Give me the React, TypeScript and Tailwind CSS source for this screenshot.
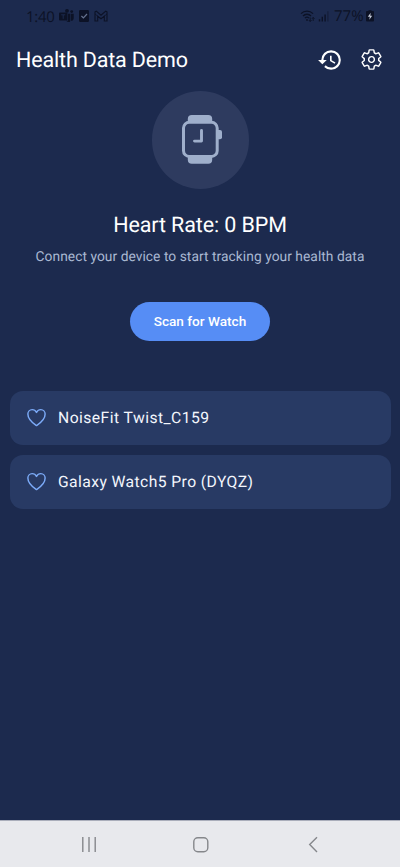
import React from "react";
import { MdHistory } from "react-icons/md";
import { IoSettingsOutline, IoHeartOutline } from "react-icons/io5";

function StatusBar() {
  return (
    <div className="flex h-8 items-center justify-between pl-[26px] pr-[26px] text-[#0c1226]">
      <div className="flex items-center">
        <span className="w-[29px] whitespace-nowrap pt-px text-[15px] leading-8 font-['Open_Sans',sans-serif] tracking-[-0.3px]">1:40</span>
        <svg className="ml-1 h-4 w-[50px]" viewBox="0 0 50 16" fill="currentColor">
          <rect x="0" y="4.5" width="8.5" height="8" rx="1" />
          <path d="M2.2 6.8h4M4.2 6.8v4" stroke="#1c2a4e" strokeWidth="1" fill="none" />
          <circle cx="8" cy="2.8" r="1.9" />
          <circle cx="12.7" cy="3.6" r="1.4" />
          <path d="M9 5.7h2.1v8.1a4 4 0 0 1-4-1H9zM11.7 5.7h3v4.2a2.8 2.8 0 0 1-3 2.8z" />
          <rect x="20" y="2" width="10" height="12" rx="1.2" />
          <path d="m22.4 8 2 2 3.6-4" stroke="#65718e" strokeWidth="1.2" fill="none" />
          <path d="M36 13V3.8l1.3-.6 4.7 4 4.7-4 1.3.6V13h-2.7V8.3L42 10.8l-3.3-2.5V13z" fill="none" stroke="currentColor" strokeWidth="1.1" />
          <path d="m36 6 6 4.7L48 6" fill="none" stroke="currentColor" strokeWidth=".8" />
        </svg>
      </div>
      <div className="flex items-center">
        <svg className="h-4 w-[31px]" viewBox="0 0 31 16" fill="none" stroke="currentColor">
          <path d="M1 5.6a8.5 8.5 0 0 1 12 0M3 8a5.5 5.5 0 0 1 8 0M4.9 10.1a3 3 0 0 1 4.2 0" strokeWidth="1.3" />
          <circle cx="7" cy="12" r=".9" fill="currentColor" stroke="none" />
          <path d="M10.2 9.5v4M8.8 12l1.4 1.5 1.4-1.5M13.2 13V9.5M11.9 10.8l1.3-1.4 1.3 1.4" strokeWidth=".9" />
          <path d="M19.5 13.4v-2.2M22.3 13.4V8.7M25.1 13.4V6.4" strokeWidth="1.4" />
          <path d="M27.9 13.4V3.3" strokeWidth="1.2" opacity=".5" />
        </svg>
        <span className="ml-[3px] w-[31px] whitespace-nowrap text-[15px] leading-8 font-['Open_Sans',sans-serif]">77%</span>
        <svg className="ml-[1px] h-3 w-2" viewBox="0 0 8 12">
          <path d="M2.5 1V.3h3V1H7a1 1 0 0 1 1 1v8.5a1 1 0 0 1-1 1H1a1 1 0 0 1-1-1V2a1 1 0 0 1 1-1z" fill="currentColor" />
          <path d="M4.7 2.8 1.8 6.8h2L3.3 9.7l2.9-4H4.3z" fill="#c5cbda" />
        </svg>
      </div>
    </div>
  );
}

function WatchIcon() {
  return (
    <svg className="mb-[2px] ml-[3px] h-[50px] w-11" viewBox="0 0 44 50" fill="#9fafcb">
      <path d="M7.8 7.5V5a4 4 0 0 1 4-4h16.4a4 4 0 0 1 4 4v2.5zM7.8 42v3.7a4 4 0 0 0 4 4h16.4a4 4 0 0 0 4-4V42z" />
      <rect x="3.5" y="8.3" width="33.7" height="34.2" rx="5.8" fill="#2e3b5f" stroke="#9fafcb" strokeWidth="3" />
      <path d="M38 16h2a2 2 0 0 1 2 2v5.3a2 2 0 0 1-2 2h-2z" />
      <path d="M21.5 16.4v10.7h-7" fill="none" stroke="#9fafcb" strokeWidth="2.9" strokeLinecap="round" strokeLinejoin="round" />
    </svg>
  );
}

function DeviceRow({ name, width }: { name: string; width: number }) {
  return (
    <div className="flex h-[54.5px] items-center rounded-[13px] bg-[#283a64] pb-px pl-[15.5px]">
      <IoHeartOutline className="size-[23px] text-[#7cabf8]" />
      <svg className="ml-[10px] h-6 overflow-visible" width={width} fill="#f3f6fc">
        <text x="0" y="18" fontSize="15.7" textLength={width}>{name}</text>
      </svg>
    </div>
  );
}

export default function App() {
  return (
    <div className="flex h-[867px] w-[400px] flex-col overflow-hidden bg-[#1c2a4e] font-['Roboto',sans-serif] text-white [text-rendering:geometricPrecision]">
      <StatusBar />
      <header className="flex h-14 items-center justify-between pl-4 pr-[17px]">
        <h1 className="pt-px text-[21.5px] leading-7 tracking-[-0.16px] whitespace-nowrap">Health Data Demo</h1>
        <div className="mb-px flex items-center gap-[17px]">
          <MdHistory className="size-[26px]" />
          <IoSettingsOutline className="size-[23px]" />
        </div>
      </header>
      <main className="flex flex-1 flex-col items-center">
        <div className="mt-[3px] ml-px flex size-[97.5px] items-center justify-center rounded-full bg-[#2e3b5f]">
          <WatchIcon />
        </div>
        <h2 className="mt-[23.5px] text-[21.5px] leading-7 tracking-[-0.12px] whitespace-nowrap">Heart Rate: 0 BPM</h2>
        <p className="mt-[7px] text-[13.8px] leading-5 tracking-[0.04px] whitespace-nowrap text-[#a9b8d2]">Connect your device to start tracking your health data</p>
        <button className="mt-[34.5px] h-[39px] w-[140px] rounded-full bg-[#568df5] text-[13.6px] font-medium whitespace-nowrap">Scan for Watch</button>
        <div className="mt-[50px] flex w-full flex-col gap-[9.5px] px-[9.5px]">
          <DeviceRow name="NoiseFit Twist_C159" width={151} />
          <DeviceRow name="Galaxy Watch5 Pro (DYQZ)" width={195} />
        </div>
      </main>
      <nav className="flex h-[47px] items-center border-t border-[#aaaebb] bg-[#e8e9ed] text-[#85878b]">
        <svg className="h-[46px] w-full" viewBox="0 0 400 46" fill="none" stroke="currentColor" strokeWidth="1.4">
          <path d="M82.8 16v15M89 16v15M95.2 16v15" />
          <rect x="193.8" y="16.7" width="14" height="14" rx="4" />
          <path d="m317 16.3-7.3 7.3 7.3 7.3" />
        </svg>
      </nav>
    </div>
  );
}
